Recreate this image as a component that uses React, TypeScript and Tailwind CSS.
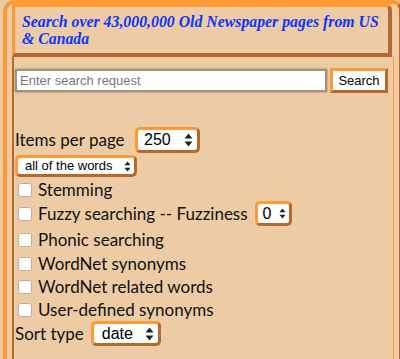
import React from 'react';

const options = [
  { label: 'Stemming' },
  { label: 'Fuzzy searching -- Fuzziness', fuzzy: true },
  { label: 'Phonic searching' },
  { label: 'WordNet synonyms' },
  { label: 'WordNet related words' },
  { label: 'User-defined synonyms' },
];

function Arrows({ size = 'md' }: { size?: 'sm' | 'md' }) {
  const w = size === 'sm' ? 7 : 9;
  const h = size === 'sm' ? 11 : 14;
  return (
    <svg width={w} height={h} viewBox="0 0 9 14" className="shrink-0">
      <path d="M4.5 0.5 L8.5 5.5 L0.5 5.5 Z" fill="#222" />
      <path d="M4.5 13.5 L8.5 8.5 L0.5 8.5 Z" fill="#222" />
    </svg>
  );
}

function FakeSelect({
  value,
  className,
  text,
  arrows = 'md',
}: {
  value: string;
  className: string;
  text: string;
  arrows?: 'sm' | 'md';
}) {
  return (
    <div
      className={
        'flex items-center justify-between rounded-[5px] border-[3px] border-t-[#ff9933] border-l-[#ff9933] border-r-[#b5692a] border-b-[#b5692a] bg-white font-["Liberation_Sans",Arial,sans-serif] text-black ' +
        className
      }
    >
      <span className={text}>{value}</span>
      <Arrows size={arrows} />
    </div>
  );
}

function Checkbox() {
  return <span className="inline-block h-[14px] w-[14px] shrink-0 rounded-[3px] border border-[#b9b1a8] bg-white" />;
}

export default function App() {
  return (
    <div className="h-[359px] w-[400px] overflow-hidden bg-[#edcba5]">
      <div className="ml-[3px] h-[380px] w-[400px] rounded-tl-[12px] rounded-tr-[10px] border-4 border-t-[#ff9933] border-l-[#ff9933] border-r-[#b5692a] border-b-[#b5692a] pl-[5px]">
        <div className="w-[380px] rounded-tr-[6px] border-[3px] border-b-4 border-r-4 border-t-[#ff9933] border-l-[#ff9933] border-r-[#b5692a] border-b-[#b5692a] pb-[6px] pl-[7px] pt-[6px]">
          <h1 className="font-['Liberation_Serif','Times_New_Roman',serif] text-[15.8px] font-bold italic leading-[17px] text-[#0a36ff]">
            Search over 43,000,000 Old Newspaper pages from US &amp; Canada
          </h1>
        </div>
        <div className="h-[320px] w-[382px] border-l-2 border-r border-l-[#b5692a] border-r-[#ff9933] pl-[1px] pt-[11px] font-['Lato','Open_Sans',sans-serif] text-[17px] text-[#111]">
          <div className="flex items-center gap-[3px]">
            <input
              type="text"
              placeholder="Enter search request"
              className="h-[23px] w-[312px] border-2 border-[#a4917d] bg-white px-[3px] font-['Liberation_Sans',Arial,sans-serif] text-[13px] shadow-[0_0_2px_#8a7a6a] outline-none placeholder:text-[#777]"
            />
            <button className="h-[25px] w-[58px] border-[3px] border-t-[#ff9933] border-l-[#ff9933] border-r-[#b5692a] border-b-[#b5692a] bg-white font-['Liberation_Sans',Arial,sans-serif] text-[13px] text-black">
              Search
            </button>
          </div>

          <div className="mt-[34px] flex h-[26px] items-center">
            <span className="w-[120px]">Items per page</span>
            <FakeSelect value="250" className="h-[26px] w-[65px] pl-[6px] pr-[4px]" text="text-[16px]" />
          </div>
          <div className="mt-[2px] flex h-[22px] items-center">
            <FakeSelect value="all of the words" className="h-[22px] w-[122px] pl-[7px] pr-[3px]" text="text-[13px]" arrows="sm" />
          </div>

          <div className="mt-[1px]">
            {options.map((o, i) => (
              <div
                key={o.label}
                className={
                  'flex items-center gap-[6px] pl-[3px] ' +
                  (o.fuzzy ? 'h-[25px]' : i === 2 ? 'mt-[2px] h-[24px]' : 'h-[23px]')
                }
              >
                <Checkbox />
                <span>{o.label}</span>
                {o.fuzzy && (
                  <FakeSelect value="0" className="ml-[1px] h-[25px] w-[37px] pl-[5px] pr-[3px]" text="text-[16px]" arrows="sm" />
                )}
              </div>
            ))}
            <div className="flex h-[25px] items-center gap-[7px]">
              <span>Sort type</span>
              <FakeSelect value="date" className="h-[25px] w-[70px] pl-[8px] pr-[4px]" text="text-[16px]" />
            </div>
          </div>
        </div>
      </div>
    </div>
  );
}
